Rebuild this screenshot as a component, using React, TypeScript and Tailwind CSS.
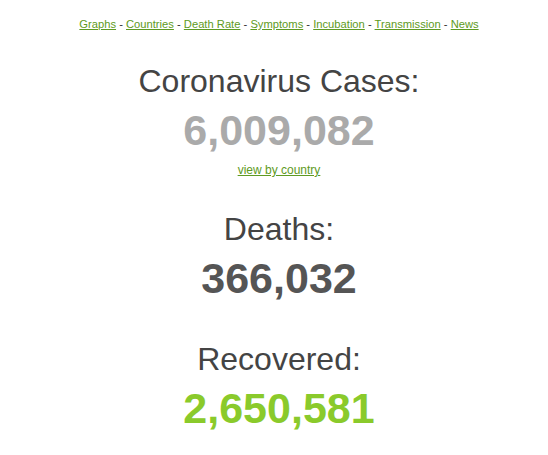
import React from "react";

const links = [
  "Graphs",
  "Countries",
  "Death Rate",
  "Symptoms",
  "Incubation",
  "Transmission",
  "News",
];

interface CounterProps {
  title: string;
  value: string;
  color: string;
  className?: string;
}

const Counter: React.FC<CounterProps> = ({ title, value, color, className }) => (
  <div className={className}>
    <h1 className="text-[32px] leading-[36px] text-[#444]">{title}</h1>
    <div className={`mt-[7px] text-[43px] leading-[48px] font-bold ${color}`}>
      <span>{value}</span>
    </div>
  </div>
);

export default function App() {
  return (
    <div
      className="min-h-[455px] bg-white pl-[10px] text-center"
      style={{ fontFamily: '"Liberation Sans", Arial, sans-serif' }}
    >
      <div className="pt-[17px] text-[11.2px] leading-[14px] text-[#333]">
        {links.map((l, i) => (
          <React.Fragment key={l}>
            {i > 0 && " - "}
            <a href="#" className="text-[#5e9a22] underline">
              {l}
            </a>
          </React.Fragment>
        ))}
      </div>

      <Counter
        title="Coronavirus Cases:"
        value="6,009,082"
        color="text-[#aaa]"
        className="mt-[32px]"
      />
      <div className="mt-[8px] text-[12px] leading-[16px]">
        <a href="#" className="text-[#5e9a22] underline">
          view by country
        </a>
      </div>

      <Counter
        title="Deaths:"
        value="366,032"
        color="text-[#555]"
        className="mt-[33px]"
      />

      <Counter
        title="Recovered:"
        value="2,650,581"
        color="text-[#8aca2b]"
        className="mt-[39px]"
      />
    </div>
  );
}
